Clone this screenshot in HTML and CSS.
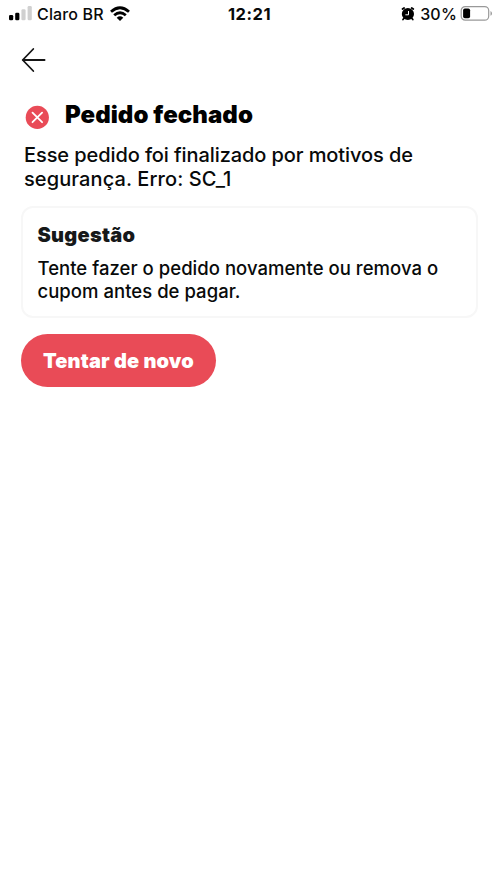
FILE: index.html
```html
<!DOCTYPE html>
<html lang="pt-BR">
<head>
<meta charset="utf-8">
<meta name="viewport" content="width=device-width, initial-scale=1">
<title>Pedido fechado</title>
<link rel="stylesheet" href="styles.css">
</head>
<body>
<div class="status">
  <div class="status-left">
    <svg class="signal" width="24" height="16" viewBox="0 0 24 16"><rect x="0" y="10" width="4.2" height="5.2" rx="1.3"/><rect x="6.2" y="7.7" width="4.2" height="7.5" rx="1.3"/><rect class="off" x="12.4" y="4.2" width="4.2" height="11" rx="1.3"/><rect class="off" x="18.6" y="1" width="4.2" height="14.2" rx="1.3"/></svg>
    <span class="carrier">Claro BR</span>
    <svg class="wifi" width="20" height="16" viewBox="0 0 20 16"><g fill="none" stroke="#000" stroke-width="2.8"><path d="M1 5.7Q10-2.2 19 5.7"/><path d="M4.2 9.2Q10 4.2 15.8 9.2"/></g><path d="M6.7 11.7Q10 8.9 13.3 11.7L10 15Z"/></svg>
  </div>
  <span class="time">12:21</span>
  <div class="status-right">
    <svg width="14" height="16" viewBox="0 0 14 16"><circle cx="7.9" cy="8" r="6.1"/><path d="M2.5 3.1L4.1 2M13.3 3.1L11.7 2M3.8 12.5L3 13.5M12 12.5L12.8 13.5" fill="none" stroke="#000" stroke-width="1.8" stroke-linecap="round"/><path d="M8.5 5V8.8H5.4" fill="none" stroke="#fff" stroke-width="1"/></svg>
    <span class="percent">30%</span>
    <svg class="battery" width="33" height="16" viewBox="0 0 33 16"><rect x="1.2" y=".6" width="27.5" height="13.6" rx="4" fill="none" stroke="#999" stroke-width="1.2"/><rect x="3.1" y="2.5" width="7" height="9.8" rx="1.8"/><path d="M30.5 5.1Q32 5.8 32 7.4T30.5 9.7Z" fill="#999"/></svg>
  </div>
</div>
<main>
  <svg class="back" width="26" height="26" viewBox="0 0 26 26"><path d="M23.6 13H1.7M12.3 2L1.7 13L12.3 24" fill="none" stroke="#151515" stroke-width="1.8" stroke-linecap="round" stroke-linejoin="round"/></svg>
  <div class="heading">
    <svg class="error" width="24" height="24" viewBox="0 0 24 24"><circle cx="12.3" cy="11.4" r="11.6" fill="#e94b57"/><path d="M7.5 6.6L17.1 16.2M17.1 6.6L7.5 16.2" stroke="#fff" stroke-width="1.8" stroke-linecap="round"/></svg>
    <h1>Pedido fechado</h1>
  </div>
  <p class="message"><span class="m1">Esse pedido foi finalizado por motivos de</span><br><span class="m2">segurança. Erro: SC_1</span></p>
  <section class="card">
    <h2>Sugestão</h2>
    <p>Tente fazer o pedido novamente ou remova o<br>cupom antes de pagar.</p>
  </section>
  <button class="retry">Tentar de novo</button>
</main>
</body>
</html>
```
FILE: styles.css
```css
* { box-sizing: border-box; }
body {
  margin: 0;
  min-height: 890px;
  background: #fff;
  color: #080a0a;
  font-family: Inter, "Liberation Sans", sans-serif;
}
svg { display: block; flex: none; overflow: visible; }
h1, h2, p { margin: 0; white-space: nowrap; }
.status {
  display: grid;
  grid-template-columns: 1fr auto 1fr;
  align-items: center;
  height: 28px;
  padding: 0 7px 0 9px;
  font-size: 16px;
  line-height: 28px;
}
.status-left, .status-right { display: flex; align-items: center; }
.status-right { justify-content: flex-end; }
.signal { margin-top: -2px; }
.signal .off { fill: #d0d0d0; }
.carrier { margin-left: 4px; font-weight: 500; letter-spacing: .15px; }
.wifi { margin-left: 6px; margin-top: -1px; }
.time { margin: 0 3px 0 0; font-size: 16.5px; font-weight: 700; letter-spacing: .5px; }
.percent { margin: 0 3px 0 6px; font-weight: 500; letter-spacing: .2px; }
main { padding: 19px 22px 0; }
.back { margin-left: -1px; }
.heading { display: flex; height: 40px; margin: 21px 0 0 3px; }
.error { margin-top: 12px; }
h1 {
  margin-left: 16px;
  color: #000;
  font-size: 24px;
  line-height: 42px;
  font-weight: 900;
  letter-spacing: .06px;
}
.message {
  margin: 9px 0 0 2px;
  font-size: 20px;
  line-height: 24px;
  font-weight: 500;
}
.m1 { letter-spacing: -.09px; }
.m2 { letter-spacing: .1px; }
.card {
  width: 457px;
  height: 112px;
  margin: 15px 0 0 -1px;
  padding: 14px 14.5px;
  border: 2px solid #f7f7f7;
  border-radius: 12px;
}
h2 {
  color: #161819;
  font-size: 20px;
  line-height: 26px;
  font-weight: 900;
  letter-spacing: .25px;
}
.card p {
  margin-top: 9px;
  font-size: 18.5px;
  line-height: 23px;
  font-weight: 500;
  letter-spacing: .03px;
}
.retry {
  display: block;
  width: 195px;
  height: 53px;
  margin: 16px 0 0 -1px;
  padding: 1px 0 0;
  border: 0;
  border-radius: 27px;
  background: #e94b57;
  color: #fff;
  font: 900 20px/52px Inter, sans-serif;
  letter-spacing: .14px;
  white-space: nowrap;
}
```
